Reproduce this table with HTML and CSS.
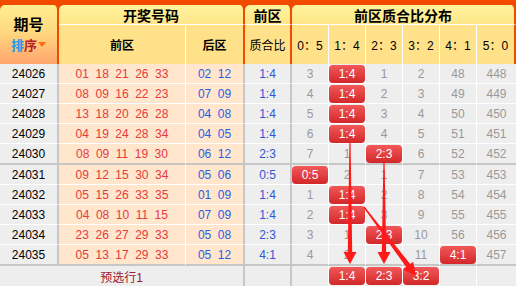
FILE: index.html
```html
<!DOCTYPE html>
<html lang="zh-CN">
<head>
<meta charset="utf-8">
<title>前区质合比分布</title>
<link rel="stylesheet" href="styles.css">
</head>
<body>
<div class="wrap">
  <div class="head">
    <div class="hc h-period">
      <div class="ht-period">期号</div>
      <div class="ht-sort"><span class="s1">排</span><span class="s2">序</span><span class="tri"></span></div>
    </div>
    <div class="hc h1 h-draw">开奖号码</div>
    <div class="hc h1 h-front">前区</div>
    <div class="hc h1 h-dist">前区质合比分布</div>
    <div class="hc h2 b">前区</div>
    <div class="hc h2 b sep">后区</div>
    <div class="hc h2 sep">质合比</div>
    <div class="hc h2 r">0：5</div>
    <div class="hc h2 r">1：4</div>
    <div class="hc h2 r">2：3</div>
    <div class="hc h2 r">3：2</div>
    <div class="hc h2 r">4：1</div>
    <div class="hc h2 r sep">5：0</div>
  </div>

  <div class="row">
    <div class="c c-period">24026</div>
    <div class="c c-front"><span>01</span><span>18</span><span>21</span><span>26</span><span>33</span></div>
    <div class="c c-back"><span>02</span><span>12</span></div>
    <div class="c c-ratio">1:4</div>
    <div class="c c-d">3</div>
    <div class="c c-d"><span class="badge">1:4</span></div>
    <div class="c c-d">1</div>
    <div class="c c-d">2</div>
    <div class="c c-d">48</div>
    <div class="c c-d last">448</div>
  </div>
  <div class="row">
    <div class="c c-period">24027</div>
    <div class="c c-front"><span>08</span><span>09</span><span>16</span><span>22</span><span>23</span></div>
    <div class="c c-back"><span>07</span><span>09</span></div>
    <div class="c c-ratio">1:4</div>
    <div class="c c-d">4</div>
    <div class="c c-d"><span class="badge">1:4</span></div>
    <div class="c c-d">2</div>
    <div class="c c-d">3</div>
    <div class="c c-d">49</div>
    <div class="c c-d last">449</div>
  </div>
  <div class="row">
    <div class="c c-period">24028</div>
    <div class="c c-front"><span>13</span><span>18</span><span>20</span><span>26</span><span>28</span></div>
    <div class="c c-back"><span>04</span><span>08</span></div>
    <div class="c c-ratio">1:4</div>
    <div class="c c-d">5</div>
    <div class="c c-d"><span class="badge">1:4</span></div>
    <div class="c c-d">3</div>
    <div class="c c-d">4</div>
    <div class="c c-d">50</div>
    <div class="c c-d last">450</div>
  </div>
  <div class="row">
    <div class="c c-period">24029</div>
    <div class="c c-front"><span>04</span><span>19</span><span>24</span><span>28</span><span>34</span></div>
    <div class="c c-back"><span>04</span><span>05</span></div>
    <div class="c c-ratio">1:4</div>
    <div class="c c-d">6</div>
    <div class="c c-d"><span class="badge">1:4</span></div>
    <div class="c c-d">4</div>
    <div class="c c-d">5</div>
    <div class="c c-d">51</div>
    <div class="c c-d last">451</div>
  </div>
  <div class="row end">
    <div class="c c-period">24030</div>
    <div class="c c-front"><span>08</span><span>09</span><span>11</span><span>19</span><span>30</span></div>
    <div class="c c-back"><span>06</span><span>12</span></div>
    <div class="c c-ratio">2:3</div>
    <div class="c c-d">7</div>
    <div class="c c-d">1</div>
    <div class="c c-d"><span class="badge">2:3</span></div>
    <div class="c c-d">6</div>
    <div class="c c-d">52</div>
    <div class="c c-d last">452</div>
  </div>

  <div class="row">
    <div class="c c-period">24031</div>
    <div class="c c-front"><span>09</span><span>12</span><span>15</span><span>30</span><span>34</span></div>
    <div class="c c-back"><span>05</span><span>06</span></div>
    <div class="c c-ratio">0:5</div>
    <div class="c c-d"><span class="badge">0:5</span></div>
    <div class="c c-d">2</div>
    <div class="c c-d">1</div>
    <div class="c c-d">7</div>
    <div class="c c-d">53</div>
    <div class="c c-d last">453</div>
  </div>
  <div class="row">
    <div class="c c-period">24032</div>
    <div class="c c-front"><span>05</span><span>15</span><span>26</span><span>33</span><span>35</span></div>
    <div class="c c-back"><span>01</span><span>09</span></div>
    <div class="c c-ratio">1:4</div>
    <div class="c c-d">1</div>
    <div class="c c-d"><span class="badge">1:4</span></div>
    <div class="c c-d">2</div>
    <div class="c c-d">8</div>
    <div class="c c-d">54</div>
    <div class="c c-d last">454</div>
  </div>
  <div class="row">
    <div class="c c-period">24033</div>
    <div class="c c-front"><span>04</span><span>08</span><span>10</span><span>11</span><span>15</span></div>
    <div class="c c-back"><span>07</span><span>09</span></div>
    <div class="c c-ratio">1:4</div>
    <div class="c c-d">2</div>
    <div class="c c-d"><span class="badge">1:4</span></div>
    <div class="c c-d">3</div>
    <div class="c c-d">9</div>
    <div class="c c-d">55</div>
    <div class="c c-d last">455</div>
  </div>
  <div class="row">
    <div class="c c-period">24034</div>
    <div class="c c-front"><span>23</span><span>26</span><span>27</span><span>29</span><span>33</span></div>
    <div class="c c-back"><span>05</span><span>08</span></div>
    <div class="c c-ratio">2:3</div>
    <div class="c c-d">3</div>
    <div class="c c-d">1</div>
    <div class="c c-d"><span class="badge">2:3</span></div>
    <div class="c c-d">10</div>
    <div class="c c-d">56</div>
    <div class="c c-d last">456</div>
  </div>
  <div class="row end">
    <div class="c c-period">24035</div>
    <div class="c c-front"><span>05</span><span>13</span><span>17</span><span>29</span><span>33</span></div>
    <div class="c c-back"><span>05</span><span>12</span></div>
    <div class="c c-ratio">4:1</div>
    <div class="c c-d">4</div>
    <div class="c c-d">2</div>
    <div class="c c-d">1</div>
    <div class="c c-d">11</div>
    <div class="c c-d"><span class="badge">4:1</span></div>
    <div class="c c-d last">457</div>
  </div>

  <div class="row pre">
    <div class="c c-pre">预选行1</div>
    <div class="c c-ratio"></div>
    <div class="c c-d"></div>
    <div class="c c-d"><span class="badge">1:4</span></div>
    <div class="c c-d"><span class="badge">2:3</span></div>
    <div class="c c-d"><span class="badge">3:2</span></div>
    <div class="c c-d"></div>
    <div class="c c-d last"></div>
  </div>

  <svg class="arrows" width="516" height="287" viewBox="0 0 516 287">
    <polygon points="349.4,143 350.6,143 352.2,252 356.5,252 350,264 343.5,252 347.8,252"/>
    <polygon points="383.4,162 384.6,162 386.2,252 390.5,252 384,264 377.5,252 381.8,252"/>
    <polygon points="363.5,207.4 406.2,267.1 403.2,269.4 416,276 413.2,261.8 410.2,264.1 364.5,206.6"/>
  </svg>
</div>
</body>
</html>
```

FILE: styles.css
```css
:root {
  --cols: 59px 127px 59px 47px 37px 37px 37px 37px 37px 39px;
  --orange: #f24a00;
  --gline: #c6c6c6;
}

body {
  margin: 0;
  background: #ffffff;
  font-family: "Liberation Sans", "Noto Sans CJK SC", sans-serif;
  font-size: 12px;
}

.wrap {
  position: relative;
  width: 516px;
}

/* header */
.head {
  display: grid;
  grid-template-columns: var(--cols);
  grid-template-rows: 20px 39px;
  background: var(--orange);
  padding-top: 5px;
}

.hc {
  box-sizing: border-box;
  display: flex;
  align-items: center;
  justify-content: center;
  color: #000;
}

.h-period {
  grid-column: 1;
  grid-row: 1 / 3;
  flex-direction: column;
  justify-content: flex-start;
  padding-top: 8px;
  border-right: 2px solid var(--orange);
  border-radius: 5px 5px 0 0;
  background: linear-gradient(#ffee8e 0%, #ffd980 45%, #ffa46c 100%);
}

.ht-period {
  font-family: "Noto Sans CJK SC", sans-serif;
  font-weight: bold;
  font-size: 15px;
  height: 22px;
  line-height: 22px;
}

.ht-sort {
  font-family: "Noto Sans CJK SC", sans-serif;
  font-weight: bold;
  font-size: 13px;
  height: 19px;
  line-height: 19px;
  display: flex;
  align-items: center;
}

.s1 { color: #2396ee; }
.s2 { color: #b8202a; }

.tri {
  width: 0;
  height: 0;
  margin-left: 1px;
  border-left: 4px solid transparent;
  border-right: 4px solid transparent;
  border-top: 5px solid #ff6a10;
}

.h1 {
  font-family: "Noto Sans CJK SC", sans-serif;
  font-weight: bold;
  font-size: 14px;
  border-right: 2px solid var(--orange);
  border-bottom: 1px solid #ffffff;
  border-radius: 5px 5px 0 0;
  background: linear-gradient(#fff39c, #ffe689);
}

.h-draw { grid-column: 2 / 4; }
.h-front { grid-column: 4; }
.h-dist { grid-column: 5 / 11; }

.h2 {
  font-family: "Liberation Sans", "Noto Sans CJK SC", sans-serif;
  font-size: 12px;
  background: #ffe18a;
  border-right: 1px solid #ffffff;
}

.h2.b { font-weight: bold; }
.h2.sep { border-right: 2px solid var(--orange); }

/* body rows */
.row {
  display: grid;
  grid-template-columns: var(--cols);
  height: 20px;
}

.row.end { height: 21px; }

.c {
  box-sizing: border-box;
  display: flex;
  align-items: center;
  justify-content: center;
  border-bottom: 1px solid #ffffff;
  font-size: 12px;
}

.row.end .c { border-bottom: 2px solid var(--gline); }
.row.pre .c { border-bottom: none; }

.c-period {
  background: #efeeee;
  color: #000;
  border-right: 2px solid var(--gline);
}

.c-front {
  background: #ffe6cc;
  color: #e63a40;
  gap: 6.5px;
  border-right: 1px solid #ffffff;
}

.c-back {
  background: #ffe6cc;
  color: #2b5de6;
  gap: 6.5px;
  border-right: 2px solid var(--gline);
}

.c-ratio {
  background: #efeeee;
  color: #2f55d4;
  border-right: 2px solid var(--gline);
}

.c-d {
  background: #efeeee;
  color: #999999;
  border-right: 1px solid #ffffff;
}

.c-d.last { border-right: none; }

.c-pre {
  grid-column: 1 / 4;
  background: #efeeee;
  color: #9c1430;
  font-family: "Liberation Sans", "Noto Sans CJK SC", sans-serif;
  border-right: 2px solid var(--gline);
}

.badge {
  box-sizing: border-box;
  width: 36px;
  height: 18px;
  border-radius: 4px;
  background: linear-gradient(#f25858, #d2282a);
  color: #ffffff;
  line-height: 18px;
  text-align: center;
}

.arrows {
  position: absolute;
  left: 0;
  top: 0;
  pointer-events: none;
}

.arrows polygon { fill: #ff1a1a; }
```
